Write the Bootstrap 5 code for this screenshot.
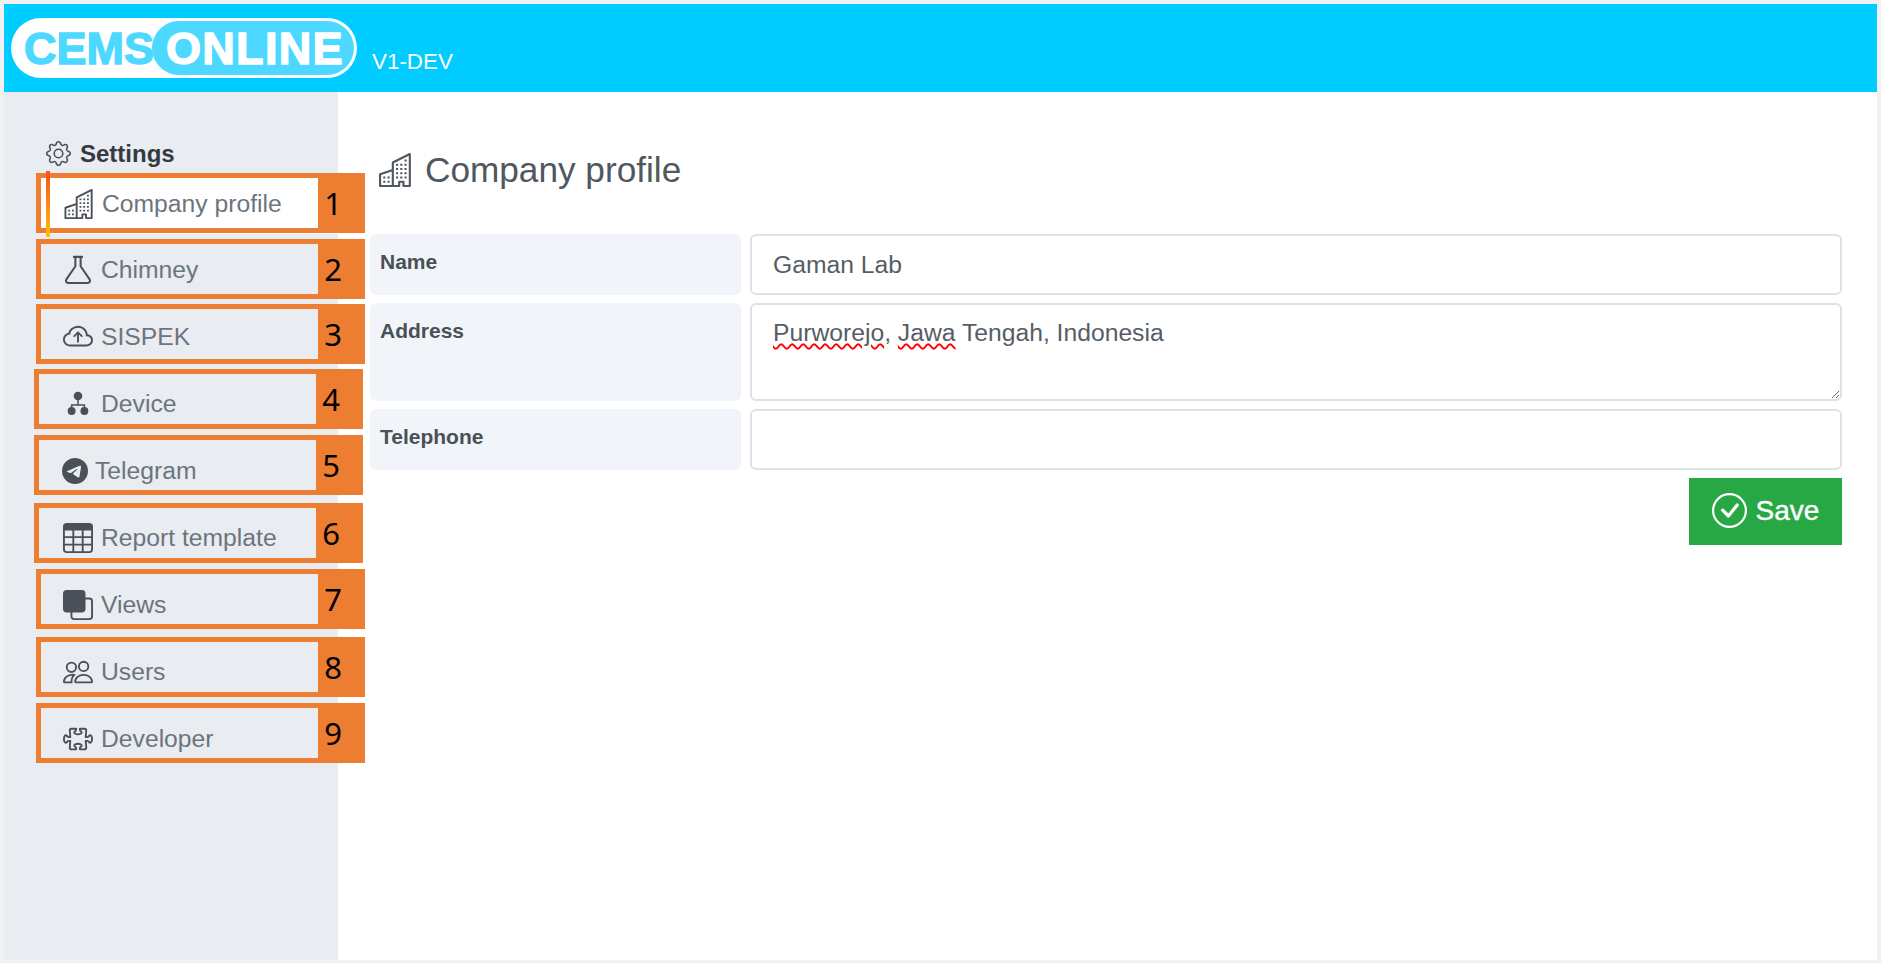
<!DOCTYPE html>
<html lang="en">
<head>
    <meta charset="UTF-8">
    <meta name="viewport" content="width=device-width, initial-scale=1.0">
    <title>CEMS Online - Company profile</title>
    <link href="https://cdn.jsdelivr.net/npm/bootstrap@5.3.0/dist/css/bootstrap.min.css" rel="stylesheet">
    <style>
        body {
            background: #f1f1f1;
            font-family: "Liberation Sans", Arial, sans-serif;
            color: #495057;
            overflow: hidden;
        }
        .app-frame { margin: 4px 4px 3px; height: 956px; background: #fff; }
        .app-header { height: 88px; background: #00ccff; padding-left: 7px; }

        /* logo */
        .logo-pill {
            width: 346px;
            height: 60px;
            background: #fff;
            border-radius: 30px;
            padding: 3px;
            font-weight: 700;
            font-size: 45px;
            line-height: 56px;
            -webkit-text-stroke: 1.4px currentColor;
        }
        .logo-cems { color: #4dd8ff; width: 138px; padding-left: 10px; }
        .logo-online {
            flex: 1;
            color: #fff;
            background: #4dd8ff;
            border-radius: 27px;
            padding-left: 14px;
            letter-spacing: 1.3px;
        }
        .app-version { color: #fff; font-size: 22.4px; margin: 28px 0 0 15px; }

        /* sidebar */
        .side-panel { width: 334px; background: #e9ecf1; padding-top: 44px; }
        .side-title {
            height: 35px;
            padding-left: 42px;
            gap: 9px;
            font-size: 24px;
            font-weight: 700;
            color: #343a40;
        }
        .side-title svg { width: 25px; height: 25px; fill: #495057; }
        .side-link {
            height: 67px;
            margin-left: 37px;
            padding: 0 0 0 21px;
            gap: 7px;
            font-size: 24.7px;
            color: #6c757d;
        }
        .side-link svg { width: 32px; height: 30px; fill: #495057; flex-shrink: 0; }
        .side-link svg.icon-narrow { width: 26px; }
        .side-link.is-current {
            height: 65px;
            padding-left: 23px;
            background: linear-gradient(#fff, #fff) center / 100% 60px no-repeat;
        }
        .side-link.is-current svg { width: 31px; }
        .side-link.is-current::before {
            content: "";
            position: absolute;
            left: 5px;
            top: 0;
            width: 4px;
            height: 66px;
            background: linear-gradient(#f4511e, #ffc107);
            z-index: 3;
        }

        /* numbered callouts laid over the sidebar */
        .callout {
            position: absolute;
            width: 329px;
            height: 60px;
            border: 5px solid #ed7d31;
            z-index: 2;
        }
        .callout-num {
            width: 42px;
            height: 100%;
            margin-left: auto;
            padding-right: 12px;
            background: #ed7d31;
            color: #000;
            font-family: "Noto Sans", sans-serif;
            font-size: 31px;
            line-height: 50px;
            text-align: center;
        }
        .callout-1 { left: 32px; top: 81px; }
        .callout-2 { left: 32px; top: 147px; }
        .callout-3 { left: 32px; top: 212px; }
        .callout-4 { left: 30px; top: 277px; }
        .callout-5 { left: 30px; top: 343px; }
        .callout-6 { left: 30px; top: 411px; }
        .callout-7 { left: 32px; top: 477px; }
        .callout-8 { left: 32px; top: 545px; }
        .callout-9 { left: 32px; top: 611px; }

        /* main form */
        .main-panel { padding: 57px 35px 0 32px; }
        .page-title {
            height: 42px;
            margin: 0 0 43px 9px;
            gap: 12px;
            font-size: 35.2px;
            font-weight: 400;
            line-height: 42px;
            color: #50575e;
        }
        .page-title svg { width: 34px; height: 34px; fill: #50575e; }
        .form-rows { gap: 8px; }
        .form-line { gap: 9px; }
        .field-name {
            width: 371px;
            flex-shrink: 0;
            margin: 0;
            padding: 14px 10px 0;
            background: #f1f5f9;
            border-radius: 6px;
            font-size: 21px;
            font-weight: 700;
            line-height: 27px;
            color: #495057;
        }
        .field-box {
            height: 61px;
            padding: 10px 21px;
            border: 2px solid #dee2e6;
            border-radius: 6px;
            font-family: "Liberation Sans", Arial, sans-serif;
            font-size: 24.7px;
            line-height: 36px;
            color: #565d64;
        }
        textarea.field-box { height: 98px; min-height: 98px; resize: vertical; }
        .spell-layer {
            position: absolute;
            inset: 0;
            padding: 12px 23px;
            font-size: 24.7px;
            line-height: 36px;
            color: transparent;
            pointer-events: none;
        }
        .spell-bad {
            text-decoration: underline wavy #f00 1.5px;
            text-underline-offset: 2px;
        }
        .save-btn {
            width: 153px;
            height: 67px;
            margin-top: 8px;
            padding-bottom: 8px;
            gap: 9px;
            border-radius: 0;
            font-size: 28px;
            -webkit-text-stroke: .4px #fff;
            background: #28a745;
            border-color: #28a745;
        }
        .save-btn svg { width: 35px; height: 35px; fill: #fff; }
    </style>
</head>
<body>
    <!-- icons -->
    <svg class="d-none" xmlns="http://www.w3.org/2000/svg">
        <symbol id="i-gear" viewBox="0 0 16 16">
            <path d="M8 4.754a3.246 3.246 0 1 0 0 6.492 3.246 3.246 0 0 0 0-6.492zM5.754 8a2.246 2.246 0 1 1 4.492 0 2.246 2.246 0 0 1-4.492 0z"/>
            <path d="M9.796 1.343c-.527-1.79-3.065-1.79-3.592 0l-.094.319a.873.873 0 0 1-1.255.52l-.292-.16c-1.64-.892-3.433.902-2.54 2.541l.159.292a.873.873 0 0 1-.52 1.255l-.319.094c-1.79.527-1.79 3.065 0 3.592l.319.094a.873.873 0 0 1 .52 1.255l-.16.292c-.892 1.64.901 3.434 2.541 2.54l.292-.159a.873.873 0 0 1 1.255.52l.094.319c.527 1.79 3.065 1.79 3.592 0l.094-.319a.873.873 0 0 1 1.255-.52l.292.16c1.64.893 3.434-.902 2.54-2.541l-.159-.292a.873.873 0 0 1 .52-1.255l.319-.094c1.79-.527 1.79-3.065 0-3.592l-.319-.094a.873.873 0 0 1-.52-1.255l.16-.292c.893-1.64-.902-3.433-2.541-2.54l-.292.159a.873.873 0 0 1-1.255-.52l-.094-.319zm-2.633.283c.246-.835 1.428-.835 1.674 0l.094.319a1.873 1.873 0 0 0 2.693 1.115l.291-.16c.764-.415 1.6.42 1.184 1.185l-.159.292a1.873 1.873 0 0 0 1.116 2.692l.318.094c.835.246.835 1.428 0 1.674l-.319.094a1.873 1.873 0 0 0-1.115 2.693l.16.291c.415.764-.42 1.6-1.185 1.184l-.291-.159a1.873 1.873 0 0 0-2.693 1.116l-.094.318c-.246.835-1.428.835-1.674 0l-.094-.319a1.873 1.873 0 0 0-2.692-1.115l-.292.16c-.764.415-1.6-.42-1.184-1.185l.159-.291A1.873 1.873 0 0 0 1.945 8.93l-.319-.094c-.835-.246-.835-1.428 0-1.674l.319-.094A1.873 1.873 0 0 0 3.06 4.377l-.16-.292c-.415-.764.42-1.6 1.185-1.184l.292.159a1.873 1.873 0 0 0 2.692-1.115l.094-.319z"/>
        </symbol>
        <symbol id="i-buildings" viewBox="0 0 16 16">
            <path d="M14.763.075A.5.5 0 0 1 15 .5v15a.5.5 0 0 1-.5.5h-3a.5.5 0 0 1-.5-.5V14h-1v1.5a.5.5 0 0 1-.5.5h-9a.5.5 0 0 1-.5-.5V10a.5.5 0 0 1 .342-.474L6 7.64V4.5a.5.5 0 0 1 .276-.447l8-4a.5.5 0 0 1 .487.022ZM6 8.694 1 10.36V15h5V8.694ZM7 15h2v-1.5a.5.5 0 0 1 .5-.5h2a.5.5 0 0 1 .5.5V15h2V1.309l-7 3.5V15Z"/>
            <path d="M2 11h1v1H2v-1Zm2 0h1v1H4v-1Zm-2 2h1v1H2v-1Zm2 0h1v1H4v-1Zm4-4h1v1H8V9Zm2 0h1v1h-1V9Zm-2 2h1v1H8v-1Zm2 0h1v1h-1v-1Zm2-2h1v1h-1V9Zm0 2h1v1h-1v-1ZM8 7h1v1H8V7Zm2 0h1v1h-1V7Zm2 0h1v1h-1V7ZM8 5h1v1H8V5Zm2 0h1v1h-1V5Zm2 0h1v1h-1V5Zm0-2h1v1h-1V3Z"/>
        </symbol>
        <symbol id="i-flask" viewBox="0 0 16 16">
            <path fill="none" stroke="#495057" stroke-width="1.1" stroke-linecap="round" stroke-linejoin="round" d="M5.8 1h4.4M6.6 1v5L1.8 13a1.2 1.2 0 0 0 1 1.9h10.4a1.2 1.2 0 0 0 1-1.9L9.4 6V1"/>
        </symbol>
        <symbol id="i-cloud" viewBox="0 0 16 16">
            <path d="M7.646 5.146a.5.5 0 0 1 .708 0l2 2a.5.5 0 0 1-.708.708L8.5 6.707V10.5a.5.5 0 0 1-1 0V6.707L6.354 7.854a.5.5 0 1 1-.708-.708l2-2z"/>
            <path d="M4.406 3.342A5.53 5.53 0 0 1 8 2c2.69 0 4.923 2 5.166 4.579C14.758 6.804 16 8.137 16 9.773 16 11.569 14.502 13 12.687 13H3.781C1.708 13 0 11.366 0 9.318c0-1.763 1.266-3.223 2.942-3.593.143-.863.698-1.723 1.464-2.383zm.653.757c-.757.653-1.153 1.44-1.153 2.056v.448l-.445.049C2.064 6.805 1 7.952 1 9.318 1 10.785 2.23 12 3.781 12h8.906C13.98 12 15 10.988 15 9.773c0-1.216-1.02-2.228-2.313-2.228h-.5v-.5C12.188 4.825 10.328 3 8 3a4.53 4.53 0 0 0-2.941 1.1z"/>
        </symbol>
        <symbol id="i-device" viewBox="0 0 16 16">
            <circle cx="8" cy="3.7" r="2.3"/>
            <circle cx="4.6" cy="11.7" r="2.1"/>
            <circle cx="11.4" cy="11.7" r="2.1"/>
            <path fill="none" stroke="#495057" stroke-width=".8" d="M8 5v3.5M4.6 11V8.5h6.8V11"/>
        </symbol>
        <symbol id="i-telegram" viewBox="0 0 16 16">
            <path d="M16 8A8 8 0 1 1 0 8a8 8 0 0 1 16 0zM8.287 5.906c-.778.324-2.334.994-4.666 2.01-.378.15-.577.298-.595.442-.03.243.275.339.69.47l.175.055c.408.133.958.288 1.243.294.26.006.549-.1.868-.32 2.179-1.471 3.304-2.214 3.374-2.23.05-.012.12-.026.166.016.047.041.042.12.037.141-.03.129-1.227 1.241-1.846 1.817-.193.18-.33.307-.358.336a8.154 8.154 0 0 1-.188.186c-.38.366-.664.64.015 1.088.327.216.589.393.85.571.284.194.568.387.936.629.093.06.183.125.27.187.331.236.63.448.997.414.214-.02.435-.22.547-.82.265-1.417.786-4.486.906-5.751a1.426 1.426 0 0 0-.013-.315.337.337 0 0 0-.114-.217.526.526 0 0 0-.31-.093c-.3.005-.763.166-2.984 1.09z"/>
        </symbol>
        <symbol id="i-table" viewBox="0 0 16 16">
            <path d="M0 2a2 2 0 0 1 2-2h12a2 2 0 0 1 2 2v12a2 2 0 0 1-2 2H2a2 2 0 0 1-2-2V2zm15 2h-4v3h4V4zm0 4h-4v3h4V8zm0 4h-4v3h3a1 1 0 0 0 1-1v-2zm-5 3v-3H6v3h4zm-5 0v-3H1v2a1 1 0 0 0 1 1h3zm-4-4h4V8H1v3zm0-4h4V4H1v3zm5-3v3h4V4H6zm4 4H6v3h4V8z"/>
        </symbol>
        <symbol id="i-back" viewBox="0 0 16 16">
            <path d="M0 2a2 2 0 0 1 2-2h8a2 2 0 0 1 2 2v2h2a2 2 0 0 1 2 2v8a2 2 0 0 1-2 2H6a2 2 0 0 1-2-2v-2H2a2 2 0 0 1-2-2V2zm5 10v2a1 1 0 0 0 1 1h8a1 1 0 0 0 1-1V6a1 1 0 0 0-1-1h-2v5a2 2 0 0 1-2 2H5z"/>
        </symbol>
        <symbol id="i-people" viewBox="0 0 16 16">
            <path d="M15 14s1 0 1-1-1-4-5-4-5 3-5 4 1 1 1 1h8Zm-7.978-1A.261.261 0 0 1 7 12.996c.001-.264.167-1.03.76-1.72C8.312 10.629 9.282 10 11 10c1.717 0 2.687.63 3.24 1.276.593.69.758 1.457.76 1.72l-.008.002a.274.274 0 0 1-.014.002H7.022ZM11 7a2 2 0 1 0 0-4 2 2 0 0 0 0 4Zm3-2a3 3 0 1 1-6 0 3 3 0 0 1 6 0ZM6.936 9.28a5.88 5.88 0 0 0-1.23-.247A7.35 7.35 0 0 0 5 9c-4 0-5 3-5 4 0 .667.333 1 1 1h4.216A2.238 2.238 0 0 1 5 13c0-1.01.377-2.042 1.09-2.904.243-.294.526-.569.846-.816ZM4.92 10A5.493 5.493 0 0 0 4 13H1c0-.26.164-1.03.76-1.724.545-.636 1.492-1.256 3.16-1.275ZM1.5 5.5a3 3 0 1 1 6 0 3 3 0 0 1-6 0Zm3-2a2 2 0 1 0 0 4 2 2 0 0 0 0-4Z"/>
        </symbol>
        <symbol id="i-puzzle" viewBox="0 0 16 16">
            <path d="M3.112 3.645A1.5 1.5 0 0 1 4.605 2H7a.5.5 0 0 1 .5.5v.382c0 .696-.497 1.182-.872 1.469a.459.459 0 0 0-.115.118.113.113 0 0 0-.012.025L6.5 4.5v.003l.003.01c.004.01.014.028.036.053a.86.86 0 0 0 .27.194C7.09 4.9 7.51 5 8 5c.492 0 .912-.1 1.19-.24a.86.86 0 0 0 .271-.194.213.213 0 0 0 .039-.063v-.009a.112.112 0 0 0-.012-.025.459.459 0 0 0-.115-.118c-.375-.287-.872-.773-.872-1.469V2.5A.5.5 0 0 1 9 2h2.395a1.5 1.5 0 0 1 1.493 1.645L12.645 6.5h.237c.195 0 .42-.147.675-.48.21-.274.528-.52.943-.52.568 0 .947.447 1.154.862C15.877 6.807 16 7.387 16 8s-.123 1.193-.346 1.638c-.207.415-.586.862-1.154.862-.415 0-.733-.246-.943-.52-.255-.333-.48-.48-.675-.48h-.237l.243 2.855A1.5 1.5 0 0 1 11.395 14H9a.5.5 0 0 1-.5-.5v-.382c0-.696.497-1.182.872-1.469a.459.459 0 0 0 .115-.118.113.113 0 0 0 .012-.025L9.5 11.5v-.003a.214.214 0 0 0-.039-.064.859.859 0 0 0-.27-.193C8.91 11.1 8.49 11 8 11c-.491 0-.912.1-1.19.24a.859.859 0 0 0-.271.194.214.214 0 0 0-.039.063v.003l.001.006a.113.113 0 0 0 .012.025c.016.027.05.068.115.118.375.287.872.773.872 1.469v.382a.5.5 0 0 1-.5.5H4.605a1.5 1.5 0 0 1-1.493-1.645L3.356 9.5h-.238c-.195 0-.42.147-.675.48-.21.274-.528.52-.943.52-.568 0-.947-.447-1.154-.862C.123 9.193 0 8.613 0 8s.123-1.193.346-1.638C.553 5.947.932 5.5 1.5 5.5c.415 0 .733.246.943.52.255.333.48.48.675.48h.238l-.244-2.855zM4.605 3a.5.5 0 0 0-.498.55l.001.007.29 3.4A.5.5 0 0 1 3.9 7.5h-.782c-.696 0-1.182-.497-1.469-.872a.459.459 0 0 0-.118-.115.112.112 0 0 0-.025-.012L1.5 6.5h-.003a.213.213 0 0 0-.064.039.86.86 0 0 0-.193.27C1.1 7.09 1 7.51 1 8c0 .491.1.912.24 1.19.07.14.14.225.194.271a.213.213 0 0 0 .063.039H1.5l.006-.001a.112.112 0 0 0 .025-.012.459.459 0 0 0 .118-.115c.287-.375.773-.872 1.469-.872H3.9a.5.5 0 0 1 .498.542l-.29 3.408a.5.5 0 0 0 .497.55h1.878c-.048-.166-.195-.352-.463-.557-.274-.21-.52-.528-.52-.943 0-.568.447-.947.862-1.154C6.807 10.123 7.387 10 8 10s1.193.123 1.638.346c.415.207.862.586.862 1.154 0 .415-.246.733-.52.943-.268.205-.415.39-.463.557h1.878a.5.5 0 0 0 .498-.55l-.001-.007-.29-3.4A.5.5 0 0 1 12.1 8.5h.782c.696 0 1.182.497 1.469.872.05.065.091.099.118.115.013.008.021.01.025.012a.02.02 0 0 0 .006.001h.003a.214.214 0 0 0 .064-.039.86.86 0 0 0 .193-.27c.14-.28.24-.7.24-1.191 0-.492-.1-.912-.24-1.19a.86.86 0 0 0-.194-.271.215.215 0 0 0-.063-.039H14.5l-.006.001a.113.113 0 0 0-.025.012.459.459 0 0 0-.118.115c-.287.375-.773.872-1.469.872H12.1a.5.5 0 0 1-.498-.543l.29-3.407a.5.5 0 0 0-.497-.55H9.517c.048.166.195.352.463.557.274.21.52.528.52.943 0 .568-.447.947-.862 1.154C9.193 5.877 8.613 6 8 6s-1.193-.123-1.638-.346C5.947 5.447 5.5 5.068 5.5 4.5c0-.415.246-.733.52-.943.268-.205.415-.39.463-.557H4.605z"/>
        </symbol>
        <symbol id="i-check" viewBox="0 0 16 16">
            <path d="M8 15A7 7 0 1 1 8 1a7 7 0 0 1 0 14zm0 1A8 8 0 1 0 8 0a8 8 0 0 0 0 16z"/>
            <path d="M10.97 4.97a.235.235 0 0 0-.02.022L7.477 9.417 5.384 7.323a.75.75 0 0 0-1.06 1.06L6.97 11.03a.75.75 0 0 0 1.079-.02l3.992-4.99a.75.75 0 0 0-1.071-1.05z"/>
        </symbol>
    </svg>

    <div class="app-frame d-flex flex-column">
        <header class="app-header d-flex align-items-center flex-shrink-0">
            <div class="logo-pill d-flex">
                <span class="logo-cems">CEMS</span>
                <span class="logo-online">ONLINE</span>
            </div>
            <span class="app-version">V1-DEV</span>
        </header>

        <div class="d-flex flex-grow-1">
            <aside class="side-panel position-relative flex-shrink-0">
                <div class="side-title d-flex align-items-center">
                    <svg><use href="#i-gear"/></svg>Settings
                </div>
                <ul class="nav flex-column">
                    <li class="nav-item"><a class="nav-link side-link is-current d-flex align-items-center position-relative" href="#"><svg><use href="#i-buildings"/></svg>Company profile</a></li>
                    <li class="nav-item"><a class="nav-link side-link d-flex align-items-center" href="#"><svg><use href="#i-flask"/></svg>Chimney</a></li>
                    <li class="nav-item"><a class="nav-link side-link d-flex align-items-center" href="#"><svg><use href="#i-cloud"/></svg>SISPEK</a></li>
                    <li class="nav-item"><a class="nav-link side-link d-flex align-items-center" href="#"><svg><use href="#i-device"/></svg>Device</a></li>
                    <li class="nav-item"><a class="nav-link side-link d-flex align-items-center" href="#"><svg class="icon-narrow"><use href="#i-telegram"/></svg>Telegram</a></li>
                    <li class="nav-item"><a class="nav-link side-link d-flex align-items-center" href="#"><svg><use href="#i-table"/></svg>Report template</a></li>
                    <li class="nav-item"><a class="nav-link side-link d-flex align-items-center" href="#"><svg><use href="#i-back"/></svg>Views</a></li>
                    <li class="nav-item"><a class="nav-link side-link d-flex align-items-center" href="#"><svg><use href="#i-people"/></svg>Users</a></li>
                    <li class="nav-item"><a class="nav-link side-link d-flex align-items-center" href="#"><svg><use href="#i-puzzle"/></svg>Developer</a></li>
                </ul>

                <div class="callout callout-1"><div class="callout-num">1</div></div>
                <div class="callout callout-2"><div class="callout-num">2</div></div>
                <div class="callout callout-3"><div class="callout-num">3</div></div>
                <div class="callout callout-4"><div class="callout-num">4</div></div>
                <div class="callout callout-5"><div class="callout-num">5</div></div>
                <div class="callout callout-6"><div class="callout-num">6</div></div>
                <div class="callout callout-7"><div class="callout-num">7</div></div>
                <div class="callout callout-8"><div class="callout-num">8</div></div>
                <div class="callout callout-9"><div class="callout-num">9</div></div>
            </aside>

            <main class="main-panel flex-grow-1">
                <h1 class="page-title d-flex align-items-center">
                    <svg><use href="#i-buildings"/></svg>Company profile
                </h1>
                <form class="form-rows d-flex flex-column">
                    <div class="form-line d-flex">
                        <label class="field-name" for="companyName">Name</label>
                        <input id="companyName" class="form-control field-box" type="text" value="Gaman Lab">
                    </div>
                    <div class="form-line d-flex">
                        <label class="field-name" for="companyAddress">Address</label>
                        <div class="position-relative flex-grow-1">
                            <textarea id="companyAddress" class="form-control field-box" spellcheck="false">Purworejo, Jawa Tengah, Indonesia</textarea>
                            <div class="spell-layer"><span class="spell-bad">Purworejo</span>, <span class="spell-bad">Jawa</span> Tengah, Indonesia</div>
                        </div>
                    </div>
                    <div class="form-line d-flex">
                        <label class="field-name" for="companyPhone">Telephone</label>
                        <input id="companyPhone" class="form-control field-box" type="text">
                    </div>
                </form>
                <div class="d-flex justify-content-end">
                    <button type="button" class="btn btn-success save-btn d-flex align-items-center justify-content-center">
                        <svg><use href="#i-check"/></svg>Save
                    </button>
                </div>
            </main>
        </div>
    </div>

    <script src="https://cdn.jsdelivr.net/npm/bootstrap@5.3.0/dist/js/bootstrap.bundle.min.js"></script>
</body>
</html>
